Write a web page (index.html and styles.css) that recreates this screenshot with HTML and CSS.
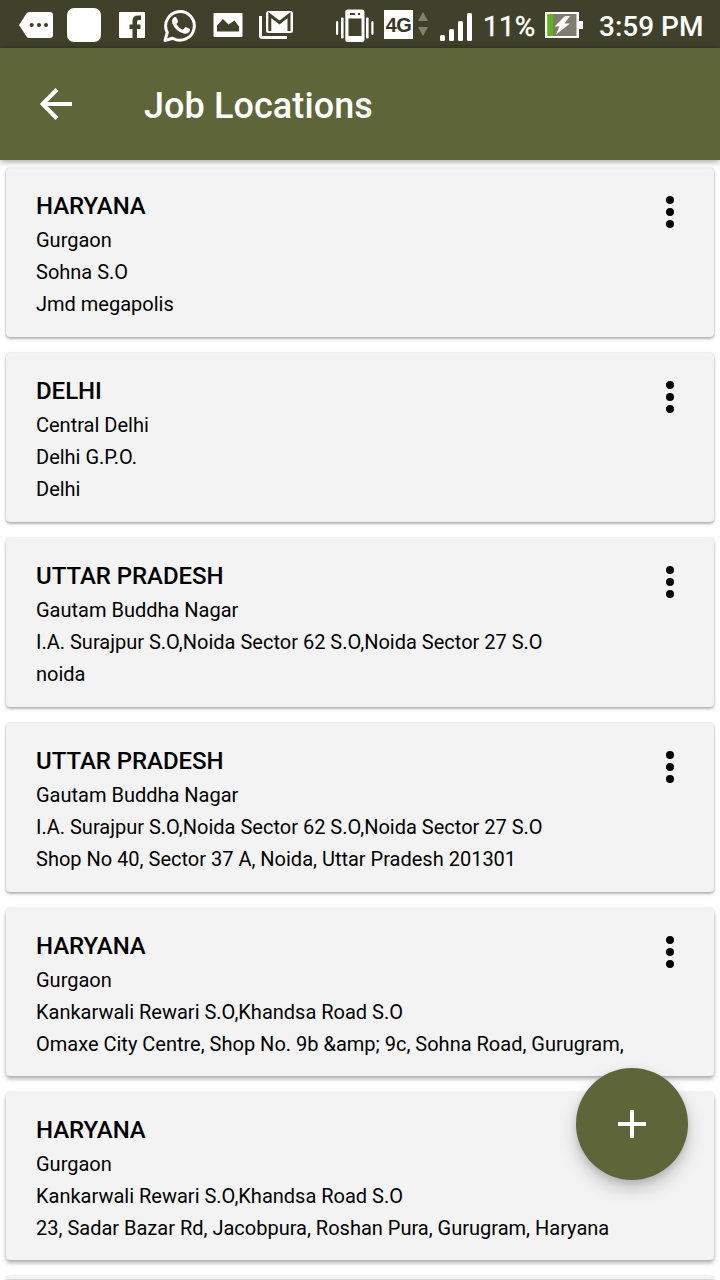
FILE: index.html
```html
<!DOCTYPE html>
<html lang="en">

<head>
  <meta charset="UTF-8" />
  <meta name="viewport" content="width=device-width, initial-scale=1.0" />
  <title>Job Locations</title>
  <link rel="stylesheet" href="styles.css">
</head>

<body>
  <div class="status-bar">
    <div class="notifications">
      <svg class="icon-message" width="34" height="48" viewBox="0 0 34 48">
        <path d="M10 12H31Q34 12 34 15V35Q34 38 31 38H10Q8.500 38 7.500 36.500L0 25L7.500 13.500Q8.500 12 10 12Z" fill="#fff" />
        <g fill="#3f412b"><circle cx="12.700" cy="25" r="2.100" /><circle cx="20" cy="25" r="2.100" /><circle cx="27" cy="25" r="2.100" /></g>
      </svg>
      <svg class="icon-app" width="34" height="48" viewBox="0 0 34 48">
        <rect y="8" width="34" height="34" rx="7" fill="#fff" />
      </svg>
      <svg class="icon-facebook" width="26" height="48" viewBox="0 0 26 48">
        <path d="M0 12H26V38H18V29H21.500V24.500H18V22Q18 20 20 20H22V15.500H19Q13.500 15.500 13.500 21V24.500H10.500V29H13.500V38H0Z" fill="#fff" />
      </svg>
      <svg class="icon-whatsapp" width="34" height="48" viewBox="0 0 34 48">
        <path d="M2 40.500L4.300 32.500A14.300 14.300 0 1 1 9.700 38.200Z" fill="none" stroke="#fff" stroke-width="3" stroke-linejoin="round" />
        <path d="M11.500 17Q13 16.500 13.700 18L15 21Q15.300 22 13.800 23.500Q13.200 24 13.800 24.800Q16 28.400 19.500 29.500Q20.200 29.700 20.700 29L22 27.400Q22.600 26.700 23.500 27.200L26.500 28.700Q27.200 29.100 27 30Q26 34 21.500 33.700Q13 32 9.300 23.500Q8 19.500 11.500 17Z" fill="#fff" />
      </svg>
      <svg class="icon-image" width="30" height="48" viewBox="0 0 30 48">
        <rect x=".5" y="13" width="29" height="24" rx="1" fill="#fff" />
        <path d="M4 31.500V25.500L10 19L15.500 24.500L21.500 20.500L26 26.500V31.500Z" fill="#3f412b" />
      </svg>
      <svg class="icon-gmail" width="34" height="48" viewBox="0 0 34 48">
        <path d="M1.500 16V35.500Q1.500 37.500 3.500 37.500H28" fill="none" stroke="#fff" stroke-width="3" />
        <rect x="7" y="11" width="27" height="22" rx="2.500" fill="#fff" />
        <path d="M10.800 31V15L20.500 22.500L30 15V31" fill="none" stroke="#3f412b" stroke-width="3" />
      </svg>
    </div>
    <div class="system">
      <svg class="icon-vibrate" width="38" height="48" viewBox="0 0 38 48">
        <g fill="#fff">
          <rect x="0" y="21" width="2.200" height="14" rx="1" /><rect x="5" y="17.500" width="2.600" height="21" rx="1" />
          <rect x="30" y="17.500" width="2.600" height="21" rx="1" /><rect x="35.300" y="21" width="2.200" height="14" rx="1" />
          <rect x="9.300" y="9.500" width="19.200" height="32.500" rx="2.500" />
        </g>
        <path d="M12.500 18.500H25.500V36H12.500ZM14 13H19V15H14ZM22 13H24V15H22Z" fill="#3f412b" />
      </svg>
      <span class="network">4G</span>
      <svg class="icon-data" width="12" height="48" viewBox="0 0 12 48">
        <path d="M6 12L11 21H1ZM6 36L1 27H11Z" fill="#80826f" />
      </svg>
      <svg class="icon-signal" width="33" height="48" viewBox="0 0 33 48">
        <g fill="#fff">
          <rect x="0" y="35" width="5" height="6" rx="1.500" /><rect x="9" y="29" width="5" height="12" rx="1.500" />
          <rect x="18" y="21" width="5" height="20" rx="1.500" /><rect x="27" y="13" width="5" height="28" rx="1.500" />
        </g>
      </svg>
      <span class="battery-level">11%</span>
      <svg class="icon-battery" width="38" height="48" viewBox="0 0 38 48">
        <path d="M0 12H34V21H38V29H34V38H0Z" fill="#fff" />
        <path d="M2.500 14H31.500V36H2.500Z" fill="#7d7d70" />
        <path d="M2.500 14H8V36H2.500Z" fill="#5cb512" />
        <path d="M20 16L9.500 26.500H14.500L11 34.500L25 23.500H19.500L25 16Z" fill="#fff" />
      </svg>
      <span class="clock">3:59 PM</span>
    </div>
  </div>

  <header class="app-bar">
    <svg width="32" height="32" viewBox="0 0 32 32">
      <path d="M32 16H3M17 1.500L2.500 16L17 30.500" fill="none" stroke="#fff" stroke-width="4" />
    </svg>
    <h1>Job Locations</h1>
  </header>

  <main class="locations">
    <div class="card">
      <div class="address">
        <h2>HARYANA</h2>
        <p>Gurgaon</p>
        <p>Sohna S.O</p>
        <p>Jmd megapolis</p>
      </div>
      <div class="menu"><i></i><i></i><i></i></div>
    </div>
    <div class="card">
      <div class="address">
        <h2>DELHI</h2>
        <p>Central Delhi</p>
        <p>Delhi G.P.O.</p>
        <p>Delhi</p>
      </div>
      <div class="menu"><i></i><i></i><i></i></div>
    </div>
    <div class="card">
      <div class="address">
        <h2>UTTAR PRADESH</h2>
        <p>Gautam Buddha Nagar</p>
        <p>I.A. Surajpur S.O,Noida Sector 62 S.O,Noida Sector 27 S.O</p>
        <p>noida</p>
      </div>
      <div class="menu"><i></i><i></i><i></i></div>
    </div>
    <div class="card">
      <div class="address">
        <h2>UTTAR PRADESH</h2>
        <p>Gautam Buddha Nagar</p>
        <p>I.A. Surajpur S.O,Noida Sector 62 S.O,Noida Sector 27 S.O</p>
        <p>Shop No 40, Sector 37 A, Noida, Uttar Pradesh 201301</p>
      </div>
      <div class="menu"><i></i><i></i><i></i></div>
    </div>
    <div class="card low">
      <div class="address">
        <h2>HARYANA</h2>
        <p>Gurgaon</p>
        <p>Kankarwali Rewari S.O,Khandsa Road S.O</p>
        <p>Omaxe City Centre, Shop No. 9b &amp;amp; 9c, Sohna Road, Gurugram,</p>
      </div>
      <div class="menu"><i></i><i></i><i></i></div>
    </div>
    <div class="card low">
      <div class="address">
        <h2>HARYANA</h2>
        <p>Gurgaon</p>
        <p>Kankarwali Rewari S.O,Khandsa Road S.O</p>
        <p>23, Sadar Bazar Rd, Jacobpura, Roshan Pura, Gurugram, Haryana</p>
      </div>
    </div>
    <div class="card low next"></div>
  </main>

  <button class="fab" aria-label="Add location">
    <svg width="28" height="28" viewBox="0 0 28 28">
      <path d="M14 0V28M0 14H28" stroke="#fff" stroke-width="4" />
    </svg>
  </button>
</body>

</html>
```

FILE: styles.css
```css
* {
  box-sizing: border-box;
}

body {
  margin: 0;
  height: 1280px;
  overflow: hidden;
  display: flex;
  flex-direction: column;
  font-family: Roboto, sans-serif;
  background-color: #fff;
  color: #000;
}

h1,
h2,
p {
  margin: 0;
  white-space: nowrap;
}

svg {
  display: block;
  flex: none;
}

.status-bar {
  height: 48px;
  flex: none;
  display: flex;
  justify-content: space-between;
  padding: 0 16px 0 19px;
  background-color: #3f412b;
  color: #fff;
}

.notifications,
.system {
  display: flex;
  align-items: center;
}

.icon-app {
  margin-left: 14px;
}

.icon-facebook,
.icon-whatsapp {
  margin-left: 18px;
}

.icon-image,
.icon-gmail {
  margin-left: 16px;
}

.network {
  width: 29px;
  height: 29px;
  margin: 1px 4px 0 10px;
  background-color: #fff;
  color: #34362a;
  font: bold 20px/30px "Liberation Sans", sans-serif;
  text-align: center;
  letter-spacing: -0.5px;
}

.icon-signal {
  margin-left: 11px;
}

.battery-level,
.clock {
  font-size: 28px;
  line-height: 48px;
  padding-top: 5px;
  white-space: nowrap;
}

.battery-level {
  width: 62px;
  padding-left: 10px;
  letter-spacing: 0.2px;
  -webkit-text-stroke: 0.4px #fff;
}

.icon-battery {
  margin-left: 10px;
}

.clock {
  width: 105px;
  margin-left: 16px;
  font-weight: 500;
}

.app-bar {
  position: relative;
  z-index: 1;
  height: 112px;
  flex: none;
  display: flex;
  align-items: center;
  gap: 72px;
  padding-left: 40px;
  background-color: #5e6539;
  color: #fff;
  box-shadow: 0 1px 7px rgba(0, 0, 0, 0.45);
}

.app-bar h1 {
  padding-top: 3px;
  font-size: 36px;
  font-weight: 500;
  letter-spacing: 0.08px;
}

.locations {
  height: 1120px;
  overflow: hidden;
  display: flex;
  flex-direction: column;
  gap: 16px;
  padding: 8.4px 6px 0;
}

.card {
  height: 168.8px;
  flex: none;
  display: flex;
  justify-content: space-between;
  padding: 21px 40px 0 30px;
  background-color: #f3f3f3;
  border-radius: 4px;
  box-shadow: 0 2px 3px rgba(0, 0, 0, 0.28), 0 0 2px rgba(0, 0, 0, 0.2);
}

.card.low {
  height: 168.4px;
  box-shadow: 0 3px 4px rgba(0, 0, 0, 0.3), 0 0 2px rgba(0, 0, 0, 0.12);
}

.card.next {
  height: 3px;
  padding: 0;
  border-radius: 4px 4px 0 0;
}

.card h2 {
  padding-bottom: 1px;
  font-size: 24px;
  font-weight: 500;
  line-height: 34px;
  letter-spacing: -0.05px;
}

.card p {
  font-size: 20px;
  line-height: 32px;
}

.menu {
  display: flex;
  flex-direction: column;
  gap: 4px;
  padding-top: 7px;
}

.menu i {
  width: 8px;
  height: 8px;
  border-radius: 50%;
  background-color: #000;
}

.fab {
  position: absolute;
  right: 32px;
  top: 1068px;
  z-index: 2;
  width: 112px;
  height: 112px;
  display: flex;
  align-items: center;
  justify-content: center;
  padding: 0;
  border: 0;
  border-radius: 50%;
  background-color: #5e6539;
  box-shadow: 0 9px 18px rgba(0, 0, 0, 0.2), 0 3px 6px rgba(0, 0, 0, 0.12);
}
```
